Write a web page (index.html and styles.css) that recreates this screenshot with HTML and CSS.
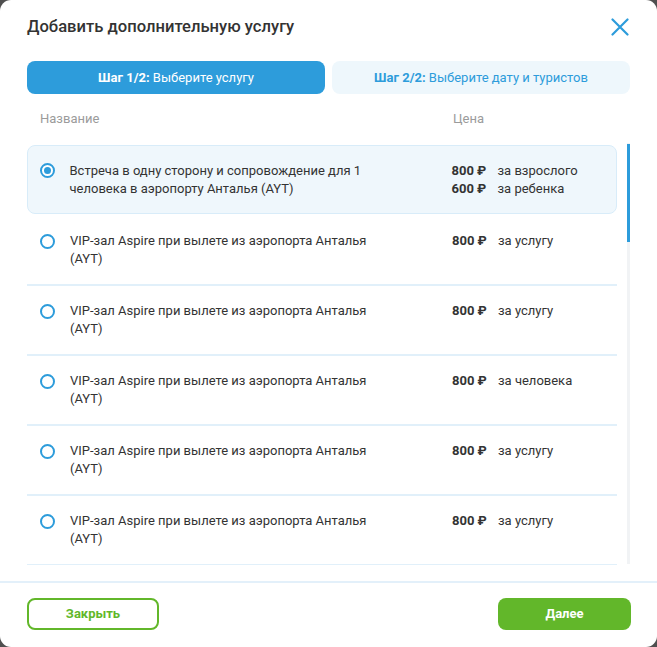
FILE: index.html
```html
<!DOCTYPE html>
<html lang="ru">
<head>
<meta charset="utf-8">
<link rel="stylesheet" href="styles.css">
</head>
<body>
<div class="modal">
  <div class="head">
    <h1 class="title">Добавить дополнительную услугу</h1>
    <button class="close" aria-label="Закрыть">
      <svg width="18" height="18" viewBox="0 0 18 18"><path d="M1.5 1.5L16.5 16.5M16.5 1.5L1.5 16.5" stroke="#2d9cdb" stroke-width="2.2" stroke-linecap="round" fill="none"/></svg>
    </button>
  </div>
  <div class="tabs">
    <div class="tab active"><b>Шаг 1/2:</b> Выберите услугу</div>
    <div class="tab"><b>Шаг 2/2:</b> Выберите дату и туристов</div>
  </div>
  <div class="cols">
    <span class="col-name">Название</span>
    <span class="col-price">Цена</span>
  </div>
  <div class="list-wrap">
    <div class="list">
      <div class="row selected">
        <span class="radio checked"></span>
        <span class="name">Встреча в одну сторону и сопровождение для 1 человека в аэропорту Анталья (AYT)</span>
        <div class="prices">
          <span class="price">800 ₽</span><span class="unit">за взрослого</span>
          <span class="price">600 ₽</span><span class="unit">за ребенка</span>
        </div>
      </div>
      <div class="row">
        <span class="radio"></span>
        <span class="name">VIP-зал Aspire при вылете из аэропорта Анталья (AYT)</span>
        <div class="prices"><span class="price">800 ₽</span><span class="unit">за услугу</span></div>
      </div>
      <div class="row">
        <span class="radio"></span>
        <span class="name">VIP-зал Aspire при вылете из аэропорта Анталья (AYT)</span>
        <div class="prices"><span class="price">800 ₽</span><span class="unit">за услугу</span></div>
      </div>
      <div class="row">
        <span class="radio"></span>
        <span class="name">VIP-зал Aspire при вылете из аэропорта Анталья (AYT)</span>
        <div class="prices"><span class="price">800 ₽</span><span class="unit">за человека</span></div>
      </div>
      <div class="row">
        <span class="radio"></span>
        <span class="name">VIP-зал Aspire при вылете из аэропорта Анталья (AYT)</span>
        <div class="prices"><span class="price">800 ₽</span><span class="unit">за услугу</span></div>
      </div>
      <div class="row">
        <span class="radio"></span>
        <span class="name">VIP-зал Aspire при вылете из аэропорта Анталья (AYT)</span>
        <div class="prices"><span class="price">800 ₽</span><span class="unit">за услугу</span></div>
      </div>
    </div>
    <div class="scroll"><div class="thumb"></div></div>
  </div>
  <div class="foot">
    <button class="btn btn-outline">Закрыть</button>
    <button class="btn btn-fill">Далее</button>
  </div>
</div>
</body>
</html>
```

FILE: styles.css
```css
* { box-sizing: border-box; }
html, body { margin: 0; padding: 0; }
body {
  background: #4f4f4f;
  font-family: Roboto, "Noto Sans", Arial, sans-serif;
  color: #333333;
}
.modal {
  width: 657px;
  height: 647px;
  background: #ffffff;
  border-radius: 11px;
  display: flex;
  flex-direction: column;
  overflow: hidden;
}
.head {
  display: flex;
  align-items: center;
  justify-content: space-between;
  padding: 14px 27px 0 27px;
  height: 40px;
}
.title {
  margin: 0;
  font-size: 16.6px;
  font-weight: 500;
  color: #333333;
  line-height: 24px;
}
.close {
  border: 0;
  background: none;
  padding: 0;
  width: 18px;
  height: 18px;
  display: flex;
  margin-right: 1px;
}
.tabs {
  display: flex;
  gap: 7px;
  padding: 0 27px;
  margin-top: 21px;
}
.tab {
  flex: 1;
  height: 33px;
  border-radius: 8px;
  background: #eef7fc;
  color: #2d9cdb;
  font-size: 13px;
  display: flex;
  align-items: center;
  justify-content: center;
  white-space: pre;
}
.tab b { font-weight: 700; }
.tab.active {
  background: #2d9cdb;
  color: #ffffff;
}
.cols {
  display: flex;
  padding: 0 0 0 40px;
  margin-top: 16px;
  height: 18px;
  font-size: 13px;
  line-height: 18px;
  color: #9b9b9b;
}
.col-name { width: 413px; }
.list-wrap {
  display: flex;
  padding: 0 27px;
  margin-top: 15px;
  height: 422px;
}
.list {
  flex: 1;
  overflow: hidden;
  padding-top: 2px;
}
.scroll {
  width: 3px;
  margin-left: 10px;
  background: #f1f3f5;
  height: 421px;
}
.thumb {
  width: 3px;
  height: 98px;
  margin-top: 1px;
  background: #2d9cdb;
}
.row {
  display: grid;
  grid-template-columns: 30px 382px auto;
  align-items: start;
  padding: 16px 0 16px 13px;
  border-bottom: 2px solid #e1f0fa;
  font-size: 13px;
  line-height: 18px;
}
.row.selected {
  background: #eff7fc;
  border: 1.5px solid #d8ecf9;
  border-radius: 8px;
  padding: 15.5px 0 15.5px 11.5px;
  margin-bottom: 2px;
}
.radio {
  width: 15px;
  height: 15px;
  margin-top: 1.5px;
  border-radius: 50%;
  border: 2.5px solid #2d9cdb;
  display: flex;
  align-items: center;
  justify-content: center;
}
.radio.checked {
  border-width: 2px;
  background: #ffffff;
}
.radio.checked::after {
  content: "";
  width: 7px;
  height: 7px;
  border-radius: 50%;
  background: #2d9cdb;
}
.name {
  max-width: 310px;
  color: #333333;
}
.prices {
  display: grid;
  grid-template-columns: 46px auto;
}
.price { font-weight: 700; }
.foot {
  margin-top: 16px;
  border-top: 2px solid #e3f0fa;
  display: flex;
  justify-content: space-between;
  padding: 15px 26px 0 27px;
}
.btn {
  width: 133px;
  height: 32px;
  padding: 0;
  line-height: 28px;
  border-radius: 8px;
  font-family: Roboto, "Noto Sans", Arial, sans-serif;
  font-size: 13px;
  font-weight: 700;
  cursor: pointer;
}
.btn-outline {
  width: 132px;
  background: #ffffff;
  border: 2px solid #62b72a;
  color: #62b72a;
}
.btn-fill {
  background: #62b72a;
  border: 0;
  color: #ffffff;
}
```
